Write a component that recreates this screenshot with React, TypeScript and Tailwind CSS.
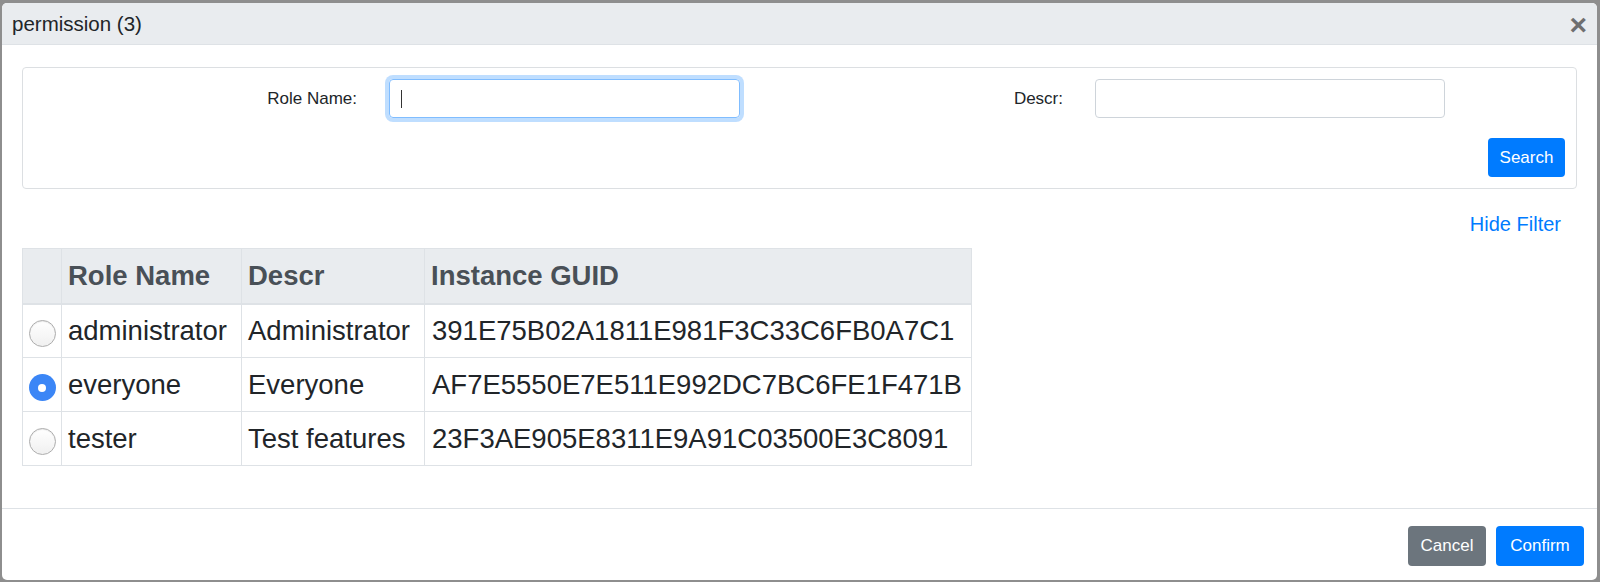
import { useState } from 'react';

const roles = [
  { name: 'administrator', descr: 'Administrator', guid: '391E75B02A1811E981F3C33C6FB0A7C1' },
  { name: 'everyone', descr: 'Everyone', guid: 'AF7E5550E7E511E992DC7BC6FE1F471B' },
  { name: 'tester', descr: 'Test features', guid: '23F3AE905E8311E9A91C03500E3C8091' },
];

const Radio = ({ checked, onClick }: { checked: boolean; onClick: () => void }) =>
  checked ? (
    <button
      onClick={onClick}
      className="mx-auto mt-[6px] flex h-[27px] w-[27px] items-center justify-center rounded-full bg-[#3b86f6]"
    >
      <span className="h-[8px] w-[8px] rounded-full bg-white" />
    </button>
  ) : (
    <button
      onClick={onClick}
      className="mx-auto mt-[6px] block h-[27px] w-[27px] rounded-full border border-[#adadad] bg-gradient-to-b from-white to-[#f0f0f0] shadow-[inset_0_1px_1px_rgba(0,0,0,0.08)]"
    />
  );

const App = () => {
  const [selected, setSelected] = useState('everyone');
  const [filterVisible, setFilterVisible] = useState(true);

  return (
    <div className="h-[582px] w-[1600px] bg-[#8e8e8e] pb-[2px] pl-[2px] pr-[3px] pt-[3px] font-['Liberation_Sans',Arial,sans-serif]">
      <div className="flex h-full flex-col overflow-hidden rounded-[5px] bg-white">
        <header className="flex h-[42px] shrink-0 items-center justify-between border-b border-[#dee2e6] bg-[#e9ecef] pl-[10px] pr-[10px]">
          <h5 className="text-[20.5px] leading-[24px] font-medium text-[#212529]">permission (3)</h5>
          <button className="mt-[2px] text-[30px] leading-none font-bold text-[#6f6f6f]">×</button>
        </header>

        <div className="flex-1 px-[20px] pt-[22px]">
          {filterVisible && (
            <div className="h-[122px] rounded-[4px] border border-[#dcdfe2] pb-[11px] pr-[11px] pt-[11px]">
              <div className="flex items-center">
                <label className="w-[334px] text-right text-[17px] text-[#212529]">Role Name:</label>
                <div className="ml-[32px] flex h-[39px] w-[351px] items-center rounded-[4px] border border-[#80bdff] pl-[11px] shadow-[0_0_0_4px_rgba(0,123,255,0.25)]">
                  <span className="h-[18px] w-[1px] bg-[#333]" />
                </div>
                <label className="w-[323px] text-right text-[17px] text-[#212529]">Descr:</label>
                <div className="ml-[32px] h-[39px] w-[350px] rounded-[4px] border border-[#ced4da]" />
              </div>
              <div className="mt-[20px] flex justify-end">
                <button className="h-[39px] w-[77px] rounded-[4px] bg-[#007bff] text-[17px] text-white">
                  Search
                </button>
              </div>
            </div>
          )}

          <div className="mt-[23px] flex justify-end pr-[16px]">
            <button
              onClick={() => setFilterVisible(!filterVisible)}
              className="text-[20px] leading-[24px] text-[#007bff]"
            >
              {filterVisible ? 'Hide Filter' : 'Show Filter'}
            </button>
          </div>

          <table className="mt-[12px] w-[949px] table-fixed border-collapse text-[27.5px]">
            <colgroup>
              <col className="w-[39px]" />
              <col className="w-[180px]" />
              <col className="w-[183px]" />
              <col className="w-[547px]" />
            </colgroup>
            <thead>
              <tr className="bg-[#e9ecef] text-[#495057]">
                <th className="h-[55px] border border-b-2 border-[#dee2e6]" />
                <th className="h-[55px] border border-b-2 border-[#dee2e6] pl-[6px] text-left font-bold">Role Name</th>
                <th className="h-[55px] border border-b-2 border-[#dee2e6] pl-[6px] text-left font-bold">Descr</th>
                <th className="h-[55px] border border-b-2 border-[#dee2e6] pl-[6px] text-left font-bold">Instance GUID</th>
              </tr>
            </thead>
            <tbody className="text-[#212529]">
              {roles.map((role) => (
                <tr key={role.name}>
                  <td className="h-[54px] border border-[#dee2e6] align-middle">
                    <Radio checked={selected === role.name} onClick={() => setSelected(role.name)} />
                  </td>
                  <td className="h-[54px] border border-[#dee2e6] pl-[6px] whitespace-nowrap">{role.name}</td>
                  <td className="h-[54px] border border-[#dee2e6] pl-[6px] whitespace-nowrap">{role.descr}</td>
                  <td className="h-[54px] border border-[#dee2e6] pl-[7px] whitespace-nowrap">{role.guid}</td>
                </tr>
              ))}
            </tbody>
          </table>
        </div>

        <footer className="flex h-[72px] shrink-0 items-start justify-end gap-[10px] border-t border-[#dee2e6] pr-[13px] pt-[17px]">
          <button className="h-[40px] w-[78px] rounded-[4px] bg-[#6c757d] text-[17px] text-white">Cancel</button>
          <button className="h-[40px] w-[88px] rounded-[4px] bg-[#007bff] text-[17px] text-white">Confirm</button>
        </footer>
      </div>
    </div>
  );
};

export default App;
